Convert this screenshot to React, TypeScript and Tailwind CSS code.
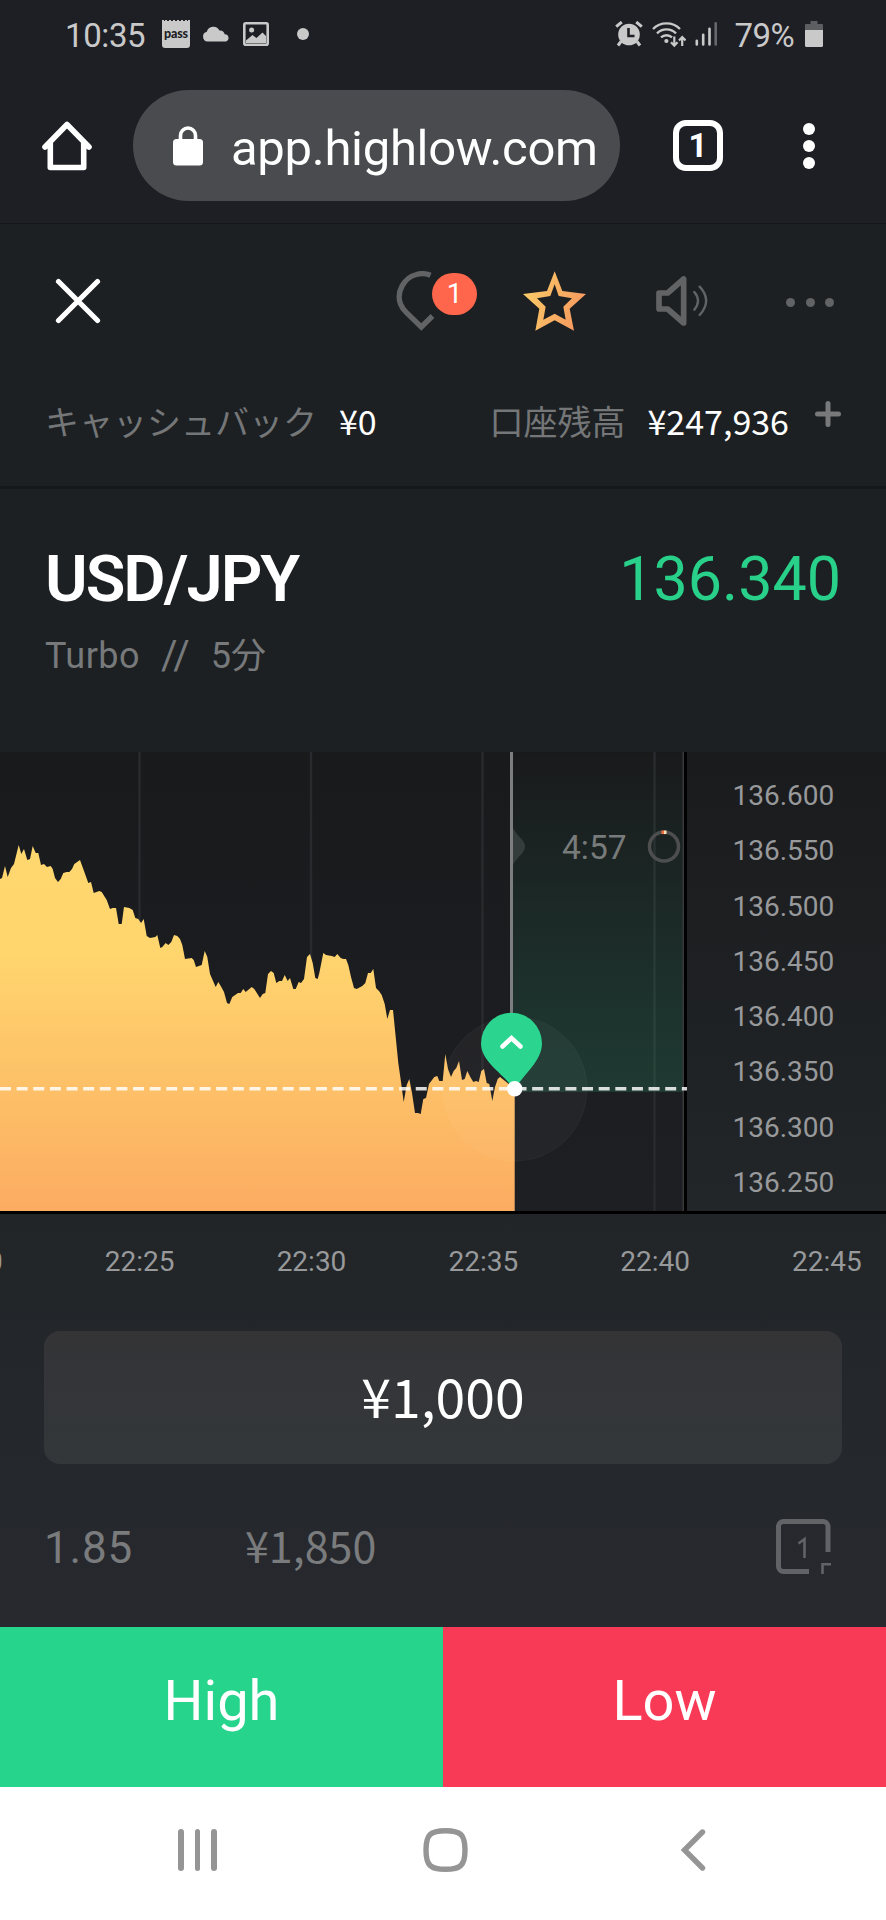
const PRICE_LABELS = ['136.600', '136.550', '136.500', '136.450', '136.400', '136.350', '136.300', '136.250'];

const TIME_LABELS = ['22:20', '22:25', '22:30', '22:35', '22:40', '22:45'];

const GRID_X = [139.5, 311, 482.5, 654.5];

// Plot coordinates, origin at the top left corner of the chart
const PRICE_LINE =
  '0,127 2,126 5,114 7.7,125 11,116 14,112 18.7,93 21.3,102 24,97 27.3,108 30,107 32.7,94 35.7,101 38.3,101 41,113 44,112 47,115 50.7,114 52.7,117 55,126 58,130 60.7,127 63.3,121 66.7,120 69.3,120 72,117 74.3,112 80,108 84,119 88.3,131 91,130 93.7,141 99.3,139 101.7,140 106.7,148 110,157 112.7,156 116,156 118.7,172 121.7,172 124,155 129.3,156 132.7,158 135.3,166 138.3,167 141,171 143.7,167 146.7,184 150,186 155.3,185 157.3,183 160.3,196 162.3,195 165.7,191 168.3,193 171.3,190 174,183 177.3,184 180,187 182.3,193 185,207 191.7,206 193.7,208 196,215 201.7,213 204.7,199 207.3,205 210,222 215.7,235 218.3,230 221.3,235 224,240 227,251 229.3,252 232.3,245 238,241 240.7,241 243.3,237 245.7,240 251.7,235 254.3,237 260,246 262.7,242 265.3,241 268,222 271,219 273.7,221 276.3,231 279.3,229 282,229 284.7,223 287.7,229 290,226 293.3,237 295.7,237 298.7,230 ' +
  '301,231 304,227 307,205 310,202 312.7,211 315.3,226 317.7,227 319.3,221 323.3,201 326,203 331.7,204 334.7,205 337.3,202 340.7,206 343.3,207 346,207 348.3,213 351,225 354,236 356.7,237 362.3,234 365.3,231 368,221 370.7,221 373.3,217 376,236 379,239 381.7,243 384.7,252 387.3,267 390,258 393,258 395.7,285 398.3,311 401,330 403.7,350 406.7,333 409.3,327 412,341 415,361 418,361 420.7,362 423.3,347 426,346 429,332 434.3,325 437.3,324 439.3,329 442.7,329 445.3,302 448,317 451,325 453.7,319 456.3,316 459,309 462,328 464.7,327 467.3,319 470.3,325 473.3,330 476,329 478.7,330 481.3,319 484,317 486.7,331 489.3,332 492.3,349 495,335 497.7,327 500,325 510,333 514.7,337';

function StatusBar() {
  return (
    <div className="flex h-[68px] items-center pl-[65px] pr-[63px] text-[33px] text-[#c9c9ca]">
      <span className="mt-[3px] w-[97px] tracking-[-0.4px]">10:35</span>

      <div className="relative flex h-[27px] w-7 items-center justify-center rounded-b-[3px] bg-[#c9c9ca]">
        <div className="absolute inset-x-0 -top-px border-t-2 border-dotted border-[#c9c9ca]" />
        <span className="font-['Lato',sans-serif] text-[12.5px] font-black leading-none tracking-[-0.2px] text-[#1e1f24]">pass</span>
      </div>
      <svg className="ml-[12px] h-4 w-[28px]" viewBox="0 0 28 16">
        <path d="M5.5 15.5a5 5 0 0 1-.7-9.8A6.8 6.8 0 0 1 17.5 4.5a5 5 0 0 1 5.2 3.8A3.7 3.7 0 0 1 24 15.5z" fill="#c9c9ca" />
      </svg>
      <svg className="ml-[13px] h-6 w-[26px]" viewBox="0 0 26 24">
        <rect x="1.3" y="1.3" width="23.4" height="21.4" rx="1.5" fill="none" stroke="#c9c9ca" strokeWidth="2.6" />
        <path d="M3 18.5 9.5 13l4 3 6-5.5L23 14v7H3z" fill="#c9c9ca" />
        <circle cx="8.6" cy="8" r="2.5" fill="#c9c9ca" />
      </svg>
      <div className="ml-[28px] size-3 rounded-full bg-[#c9c9ca]" />

      {/* Alarm */}
      <svg className="ml-auto h-[26px] w-7" viewBox="0 0 28 26">
        <circle cx="14" cy="13.5" r="10.8" fill="#c9c9ca" />
        <path d="M1.2 5.6 6.8 1M26.8 5.6 21.2 1M6 20.5l-3 4M22 20.5l3 4" stroke="#c9c9ca" strokeWidth="3" fill="none" />
        <path d="M13.5 7v8h6" stroke="#1e1f24" strokeWidth="2.6" fill="none" />
      </svg>
      {/* Wifi with traffic arrows */}
      <svg className="ml-[9px] h-[27px] w-[34px]" viewBox="0 0 34 27">
        <g fill="none" stroke="#c9c9ca" strokeWidth="2.4">
          <path d="M1 8a19 19 0 0 1 27 0" />
          <path d="M5 12.3a13.4 13.4 0 0 1 19 0" />
          <path d="M9 16.4a8 8 0 0 1 11 0" />
          <path d="M22.3 15.5v9M19 21.3l3.3 3.4 3.2-3.4M30.2 25v-9M27 19.4l3.2-3.4 3.3 3.4" strokeWidth="2.2" />
        </g>
        <circle cx="14.4" cy="20" r="2.1" fill="#c9c9ca" />
      </svg>
      <svg className="ml-[9px] h-6 w-[23px]" viewBox="0 0 23 24">
        <g strokeWidth="2.6" strokeLinecap="round" stroke="#c9c9ca">
          <path d="M1.8 18.8v3.6M8.2 12.8v9.6M14.5 6.8v15.6" />
          <path d="M20.7 1.4v21" stroke="#66676a" />
        </g>
      </svg>
      <span className="ml-[17px] mt-[3px] tracking-[-0.6px]">79%</span>
      <svg className="ml-[11px] h-[26px] w-[18px]" viewBox="0 0 18 26">
        <path d="M5.5 0h7v3H17a1 1 0 0 1 1 1v5H0V4a1 1 0 0 1 1-1h4.5z" fill="#5d5e61" />
        <path d="M0 9h18v15.5a1.5 1.5 0 0 1-1.5 1.5h-15A1.5 1.5 0 0 1 0 24.5z" fill="#c9c9ca" />
      </svg>
    </div>
  );
}

function BrowserBar() {
  return (
    <div className="flex h-[155px] items-start pl-[42px] text-white">
      <svg className="mt-[52px] h-[52px] w-[50px]" viewBox="0 0 50 52">
        <path d="M3 27 25 4.5 47 27M8.3 23v24.5h33.4V23" fill="none" stroke="white" strokeWidth="5.6" strokeLinecap="round" strokeLinejoin="round" />
      </svg>
      <div className="ml-[41px] mt-[22px] flex h-[111px] w-[487px] items-center rounded-full bg-[#4a4b4e] pl-10">
        <svg className="h-10 w-[30px]" viewBox="0 0 30 40">
          <rect y="13" width="30" height="26.5" rx="3.5" fill="white" />
          <path d="M7.5 15V9.5a7.5 7.5 0 0 1 15 0V15" fill="none" stroke="white" strokeWidth="3.6" />
        </svg>
        <span className="ml-[28px] mt-[6px] text-[49px] tracking-[-0.3px]">app.highlow.com</span>
      </div>
      <div className="ml-[53px] mt-[52px] flex h-[51px] w-[50px] items-center justify-center rounded-[13px] border-[6px] border-white text-[33px] font-bold leading-none">
        1
      </div>
      <div className="ml-[80px] mt-[55px] flex flex-col gap-[5.5px]">
        <div className="size-[11.5px] rounded-full bg-white" />
        <div className="size-[11.5px] rounded-full bg-white" />
        <div className="size-[11.5px] rounded-full bg-white" />
      </div>
    </div>
  );
}

function Toolbar() {
  return (
    <div className="flex h-[154px] items-center pl-[55px]">
      <svg className="h-[46px] w-[46px]" viewBox="0 0 46 46">
        <path d="M3.5 3.5 42.5 42.5M42.5 3.5 3.5 42.5" stroke="white" strokeWidth="5.2" strokeLinecap="round" />
      </svg>

      <div className="relative ml-[295px] flex w-[81px]">
        <svg className="h-[60px] w-[39px]" viewBox="0 0 39 60">
          <path d="M34.5 4.3C30 2.4 25 2.2 20.5 3.5 8 6.5 0 21 4.5 33c1.3 3.6 3.5 6.2 6 8.7L25.3 56 36.5 45" fill="none" stroke="#616365" strokeWidth="5.3" />
        </svg>
        <div className="absolute left-[36px] top-[2px] flex h-[42px] w-[45px] items-center justify-center rounded-full bg-[#ff664c] text-[28px] leading-none text-white">
          1
        </div>
      </div>

      <svg className="ml-[46px] h-[60px] w-[63px]" viewBox="239 124 189 178">
        <defs>
          <linearGradient id="star" x1="0" x2="1" y1="0" y2="0.3">
            <stop offset="0" stopColor="#f9d268" />
            <stop offset="1" stopColor="#f79c60" />
          </linearGradient>
        </defs>
        <path
          fillRule="evenodd"
          fill="url(#star)"
          d="M334 124 357 183 428 192 379 236 392 302 334 271 276 302 288 236 239 192 311 183ZM334 163 346 198 386 205 360 230 367 269 334 251 300 269 307 230 281 205 321 198Z"
        />
      </svg>

      <svg className="ml-[70px] h-[50px] w-[52px]" viewBox="640 138 156 150">
        <g fill="none" stroke="#616365" strokeLinecap="round" strokeLinejoin="round">
          <path d="M649 189H675L723 147V279L675 237H649Z" strokeWidth="17" />
          <path d="M755 186Q777 212 755 239M771 170Q810 212 771 255" strokeWidth="7" />
        </g>
      </svg>

      <div className="ml-[78px] mt-[2px] flex gap-[10.5px]">
        <div className="size-[9px] rounded-full bg-[#616365]" />
        <div className="size-[9px] rounded-full bg-[#616365]" />
        <div className="size-[9px] rounded-full bg-[#616365]" />
      </div>
    </div>
  );
}

function Balances() {
  return (
    <div className="flex h-[111px] items-start border-b-[3px] border-[#17181b] pl-[45px] font-['Noto_Sans_CJK_JP',sans-serif] text-[34px] leading-[86px] text-white">
      <span className="text-[#747677]">キャッシュバック</span>
      <span className="ml-[22px]">¥0</span>
      <span className="ml-auto text-[#747677]">口座残高</span>
      <span className="ml-[22px]">¥247,936</span>
      <svg className="ml-[26px] mr-[45px] mt-[23px] size-[26px]" viewBox="0 0 26 26">
        <path d="M13 2.5v21M2.5 13h21" stroke="#77797a" strokeWidth="5" strokeLinecap="round" />
      </svg>
    </div>
  );
}

function PairHeader() {
  return (
    <div className="h-[263px] px-[45px] pt-[52px]">
      <div className="flex h-[76px] items-center justify-between">
        <h1 className="text-[65px] font-semibold leading-none tracking-[-2px] text-white">USD/JPY</h1>
        <span className="text-[61px] leading-none text-[#28d089]">136.340</span>
      </div>
      <div className="mt-[17px] flex h-[44px] items-center text-[36px] leading-none text-[#77797a]">
        <span className="tracking-[0.5px]">Turbo</span>
        <span className="ml-[21px] text-[40px]">//</span>
        <span className="ml-[21px] font-['Roboto','Noto_Sans_CJK_JP',sans-serif]">
          5<span className="text-[35px]">分</span>
        </span>
      </div>
    </div>
  );
}

function Chart() {
  return (
    <div className="flex h-[462px] border-b-[3px] border-black">
      <div className="relative w-[687px] border-r-[3px] border-black bg-linear-to-b from-[#191a1c] to-[#1e1f23]">
        <svg className="block h-[459px] w-[687px]" viewBox="0 0 687 459">
          <defs>
            <linearGradient id="area" gradientUnits="userSpaceOnUse" x1="0" x2="0" y1="90" y2="459">
              <stop offset="0" stopColor="#ffd76f" />
              <stop offset="0.3" stopColor="#ffd56e" />
              <stop offset="0.68" stopColor="#fdbf67" />
              <stop offset="1" stopColor="#fcac61" />
            </linearGradient>
            <linearGradient id="win" x1="0" x2="0" y1="0" y2="1">
              <stop offset="0" stopColor="#28d089" stopOpacity="0" />
              <stop offset="1" stopColor="#28d089" stopOpacity="0.16" />
            </linearGradient>
          </defs>

          {GRID_X.map((x) => (
            <rect key={x} x={x - 1.25} width="2.5" height="459" fill="#292a2d" />
          ))}
          <rect x="513" width="170" height="340" fill="url(#win)" />
          <rect x="682.5" width="1.5" height="459" fill="#38393b" />
          <rect x="510" width="3" height="300" fill="#7c7e80" />

          <polygon points={`0,459 ${PRICE_LINE} 514.7,459`} fill="url(#area)" />
          <circle cx="515" cy="337" r="72" fill="white" fillOpacity="0.035" stroke="white" strokeOpacity="0.04" />
          <path d="M0 336.7H687" stroke="white" strokeOpacity="0.83" strokeWidth="3.6" strokeDasharray="11 5.63" />

          {/* Time to expiry */}
          <path d="M513 76c2 4 4.5 6.5 9 11.5 4 4.5 4 9.500 0 14-4.500 5-7 7.500-9 11.500z" fill="#353c3c" />
          <text x="562" y="106.5" fontSize="33.5" fill="#777b7a">4:57</text>
          <circle cx="664" cy="94.5" r="14.5" fill="none" stroke="#4d4e4e" strokeWidth="3.6" />
          <rect x="661.5" y="78.5" width="2.5" height="3.6" fill="#f0703f" />
          <rect x="664" y="78.5" width="2.5" height="3.6" fill="#fbe0b4" />

          {/* Open position marker */}
          <path d="M514 338C505 322 481 311 481 291.3a30.5 30.5 0 0 1 61 0C542 309 524 322 514 338Z" fill="#2bd58f" />
          <path d="M502.5 294.5 511.5 286 520.5 294.5" fill="none" stroke="white" strokeWidth="4.5" strokeLinecap="round" />
          <circle cx="514.7" cy="336.7" r="7.7" fill="white" />
        </svg>
      </div>

      <div className="flex-1 bg-linear-to-b from-[#1a1b1d] to-[#222629] pl-[45.5px] pt-[16px]">
        {PRICE_LABELS.map((label) => (
          <div key={label} className="h-[55.3px] text-[28px] leading-[56px] text-[#98999b]">
            {label}
          </div>
        ))}
      </div>
    </div>
  );
}

function TimeAxis() {
  return (
    <div className="flex h-[117px] overflow-hidden pt-[20px]">
      <div className="-ml-[118px] flex">
        {TIME_LABELS.map((label) => (
          <div key={label} className="w-[171.8px] text-center text-[28px] leading-[56px] text-[#98999b]">
            {label}
          </div>
        ))}
      </div>
    </div>
  );
}

function TradePanel() {
  return (
    <div className="h-[296px] px-[44px] font-['Noto_Sans_CJK_JP',sans-serif]">
      <div className="h-[133px] rounded-2xl bg-linear-to-b from-[#343437] to-[#33373a] text-center text-[53.5px] leading-[127px] text-white">
        ¥1,000
      </div>
      <div className="flex h-[163px] items-start text-[43px] text-[#7a7b7d]">
        <span className="mt-[56px] w-[201px] font-['Roboto',sans-serif] text-[44px] leading-[56px] tracking-[0.8px]">1.85</span>
        <span className="mt-[52px] leading-[56px]">¥1,850</span>
        <svg className="ml-auto mr-[10px] mt-[54px] size-[58px]" viewBox="0 0 58 58">
          <path d="M35 53.5H9.5a5 5 0 0 1-5-5V8.5a5 5 0 0 1 5-5H49a5 5 0 0 1 5 5V34" fill="none" stroke="#616366" strokeWidth="5" />
          <path d="M57 46.2H48.5V56" fill="none" stroke="#616366" strokeWidth="2.6" />
          <path d="M24.5 25.5 30.5 21V40" fill="none" stroke="#616366" strokeWidth="2.6" />
        </svg>
      </div>
    </div>
  );
}

function TradeButtons() {
  return (
    <div className="flex h-[160px] text-[56px] text-white">
      <button className="w-1/2 bg-[#26d48c] pb-3">High</button>
      <button className="w-1/2 bg-[#f93a56] pb-3">Low</button>
    </div>
  );
}

function SystemNav() {
  return (
    <div className="flex h-[133px] items-start bg-white pl-[178px] pt-[42px]">
      <div className="flex gap-[11px]">
        <div className="h-[42px] w-[5.6px] rounded-full bg-[#959595]" />
        <div className="h-[42px] w-[5.6px] rounded-full bg-[#959595]" />
        <div className="h-[42px] w-[5.6px] rounded-full bg-[#959595]" />
      </div>
      <svg className="-mt-px ml-[206px] h-[44px] w-[45px]" viewBox="0 0 45 44">
        <path d="M22.5 2.7c15 0 19.5 3.8 19.5 19.3S37.5 41.3 22.5 41.3 3 37.5 3 22 7.5 2.7 22.5 2.7Z" fill="none" stroke="#959595" strokeWidth="5.4" />
      </svg>
      <svg className="ml-[212px] h-[42px] w-[26px]" viewBox="0 0 26 42">
        <path d="M22.5 3 4.5 21 22.5 39" fill="none" stroke="#959595" strokeWidth="5.4" strokeLinecap="round" />
      </svg>
    </div>
  );
}

export default function App() {
  return (
    <div className="h-[1920px] w-[886px] overflow-hidden bg-[#1e1f24] font-['Roboto',sans-serif]">
      <StatusBar />
      <BrowserBar />
      <div className="border-t border-[#151619] bg-linear-to-b from-[#1c2023] from-40% via-[#222629] via-75% to-[#27292e]">
        <Toolbar />
        <Balances />
        <PairHeader />
        <Chart />
        <TimeAxis />
        <TradePanel />
      </div>
      <TradeButtons />
      <SystemNav />
    </div>
  );
}
